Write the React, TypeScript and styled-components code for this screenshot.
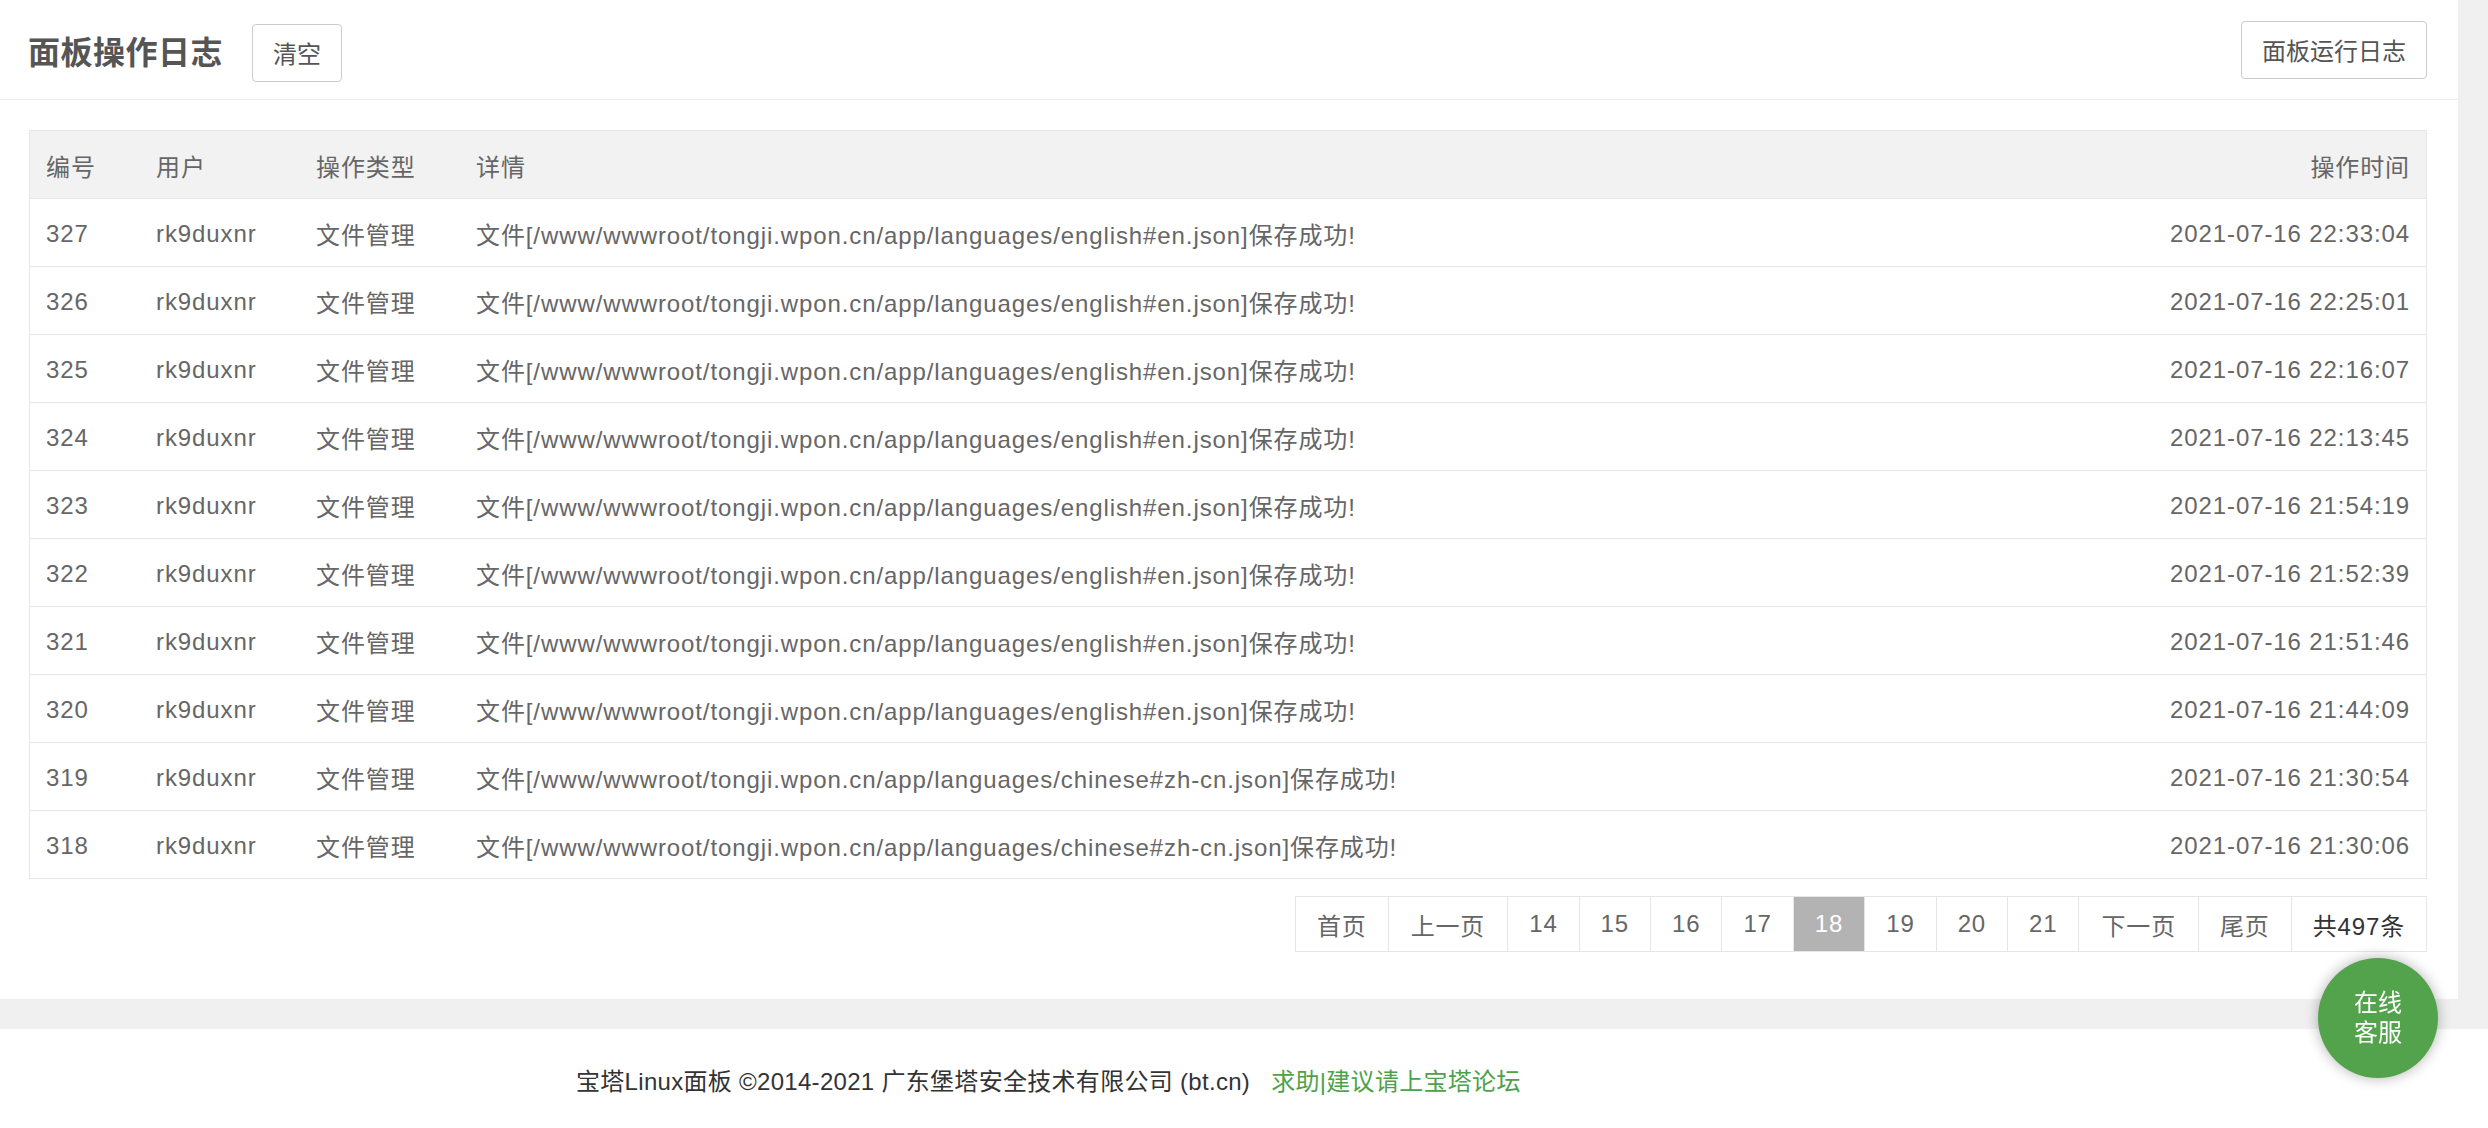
import React from "react";
import styled, { createGlobalStyle } from "styled-components";

const GlobalStyle = createGlobalStyle`
  html, body {
    margin: 0;
    padding: 0;
    background: #f0f0f0;
    font-family: "Liberation Sans", "Noto Sans CJK SC", sans-serif;
  }
  * { box-sizing: border-box; }
`;

const Page = styled.div`
  display: flex;
  flex-direction: column;
  min-height: 1128px;
`;

const Main = styled.div`
  background: #fff;
  margin-right: 30px;
  padding-bottom: 47px;
`;

const Header = styled.div`
  height: 100px;
  display: flex;
  align-items: center;
  padding: 0 31px 0 28px;
  border-bottom: 1px solid #ececec;
`;

const Title = styled.h2`
  margin: 0;
  font-size: 32px;
  font-weight: bold;
  color: #555;
  letter-spacing: 0.5px;
`;

const Button = styled.button<{ $push?: boolean }>`
  height: 58px;
  padding: 0 20px;
  margin-left: ${(p) => (p.$push ? "auto" : "29px")};
  margin-top: ${(p) => (p.$push ? "0" : "6px")};
  background: #fff;
  border: 1px solid #ccc;
  border-radius: 4px;
  font-family: inherit;
  font-size: 24px;
  color: #555;
  cursor: pointer;
`;

const Content = styled.div`
  padding: 30px 31px 0 29px;
`;

const Table = styled.div`
  border: 1px solid #e6e6e6;
`;

const Row = styled.div<{ $head?: boolean }>`
  display: grid;
  grid-template-columns: 110px 160px 160px 1fr 320px;
  height: 68px;
  padding-top: 2px;
  align-items: center;
  background: ${(p) => (p.$head ? "#f2f2f2" : "#fff")};
  border-top: 1px solid #e6e6e6;
  &:first-child {
    border-top: none;
    height: 67px;
  }
`;

const Cell = styled.div<{ $right?: boolean }>`
  padding: 0 16px;
  font-size: 24px;
  letter-spacing: 0.9px;
  color: #666;
  white-space: nowrap;
  text-align: ${(p) => (p.$right ? "right" : "left")};
`;

const Pager = styled.div`
  display: flex;
  justify-content: flex-end;
  margin-top: 17px;
`;

const PagerBox = styled.div`
  display: flex;
  border: 1px solid #e6e6e6;
  border-right: none;
  height: 56px;
`;

const PageItem = styled.span<{ $active?: boolean; $dark?: boolean; $wide?: boolean }>`
  display: flex;
  align-items: center;
  justify-content: center;
  padding: 0 ${(p) => (p.$wide ? "22px" : "21px")};
  font-size: 24px;
  letter-spacing: 0.85px;
  border-right: 1px solid #e6e6e6;
  background: ${(p) => (p.$active ? "#b3b3b3" : "#fff")};
  color: ${(p) => (p.$active ? "#fff" : p.$dark ? "#333" : "#666")};
`;

const Footer = styled.div`
  margin-top: 30px;
  background: #fff;
  height: 100px;
  display: flex;
  align-items: center;
  padding-left: 576px;
  font-size: 24px;
  letter-spacing: 0.3px;
  color: #333;
`;

const FooterLink = styled.a`
  margin-left: 21px;
  color: #4da24a;
  text-decoration: none;
`;

const ServiceBubble = styled.div`
  position: fixed;
  right: 50px;
  bottom: 50px;
  width: 120px;
  height: 120px;
  border-radius: 50%;
  background: #52a34c;
  box-shadow: 0 0 14px rgba(0, 0, 0, 0.3);
  display: flex;
  flex-direction: column;
  align-items: center;
  justify-content: center;
  color: #fff;
  font-size: 24px;
  line-height: 30px;
`;

const rows = [
  ["327", "english#en.json", "2021-07-16 22:33:04"],
  ["326", "english#en.json", "2021-07-16 22:25:01"],
  ["325", "english#en.json", "2021-07-16 22:16:07"],
  ["324", "english#en.json", "2021-07-16 22:13:45"],
  ["323", "english#en.json", "2021-07-16 21:54:19"],
  ["322", "english#en.json", "2021-07-16 21:52:39"],
  ["321", "english#en.json", "2021-07-16 21:51:46"],
  ["320", "english#en.json", "2021-07-16 21:44:09"],
  ["319", "chinese#zh-cn.json", "2021-07-16 21:30:54"],
  ["318", "chinese#zh-cn.json", "2021-07-16 21:30:06"],
];

const pages: { label: string; active?: boolean; dark?: boolean; wide?: boolean }[] = [
  { label: "首页" },
  { label: "上一页", wide: true },
  { label: "14" },
  { label: "15" },
  { label: "16" },
  { label: "17" },
  { label: "18", active: true },
  { label: "19" },
  { label: "20" },
  { label: "21" },
  { label: "下一页", wide: true },
  { label: "尾页" },
  { label: "共497条", dark: true },
];

export default function App() {
  return (
    <>
      <GlobalStyle />
      <Page>
        <Main>
          <Header>
            <Title>面板操作日志</Title>
            <Button>清空</Button>
            <Button $push>面板运行日志</Button>
          </Header>
          <Content>
            <Table>
              <Row $head>
                <Cell>编号</Cell>
                <Cell>用户</Cell>
                <Cell>操作类型</Cell>
                <Cell>详情</Cell>
                <Cell $right>操作时间</Cell>
              </Row>
              {rows.map(([id, file, time]) => (
                <Row key={id}>
                  <Cell>{id}</Cell>
                  <Cell>rk9duxnr</Cell>
                  <Cell>文件管理</Cell>
                  <Cell>{`文件[/www/wwwroot/tongji.wpon.cn/app/languages/${file}]保存成功!`}</Cell>
                  <Cell $right>{time}</Cell>
                </Row>
              ))}
            </Table>
            <Pager>
              <PagerBox>
                {pages.map((p) => (
                  <PageItem key={p.label} $active={p.active} $dark={p.dark} $wide={p.wide}>
                    {p.label}
                  </PageItem>
                ))}
              </PagerBox>
            </Pager>
          </Content>
        </Main>
        <Footer>
          宝塔Linux面板 ©2014-2021 广东堡塔安全技术有限公司 (bt.cn)
          <FooterLink href="#">求助|建议请上宝塔论坛</FooterLink>
        </Footer>
      </Page>
      <ServiceBubble>
        <span>在线</span>
        <span>客服</span>
      </ServiceBubble>
    </>
  );
}
